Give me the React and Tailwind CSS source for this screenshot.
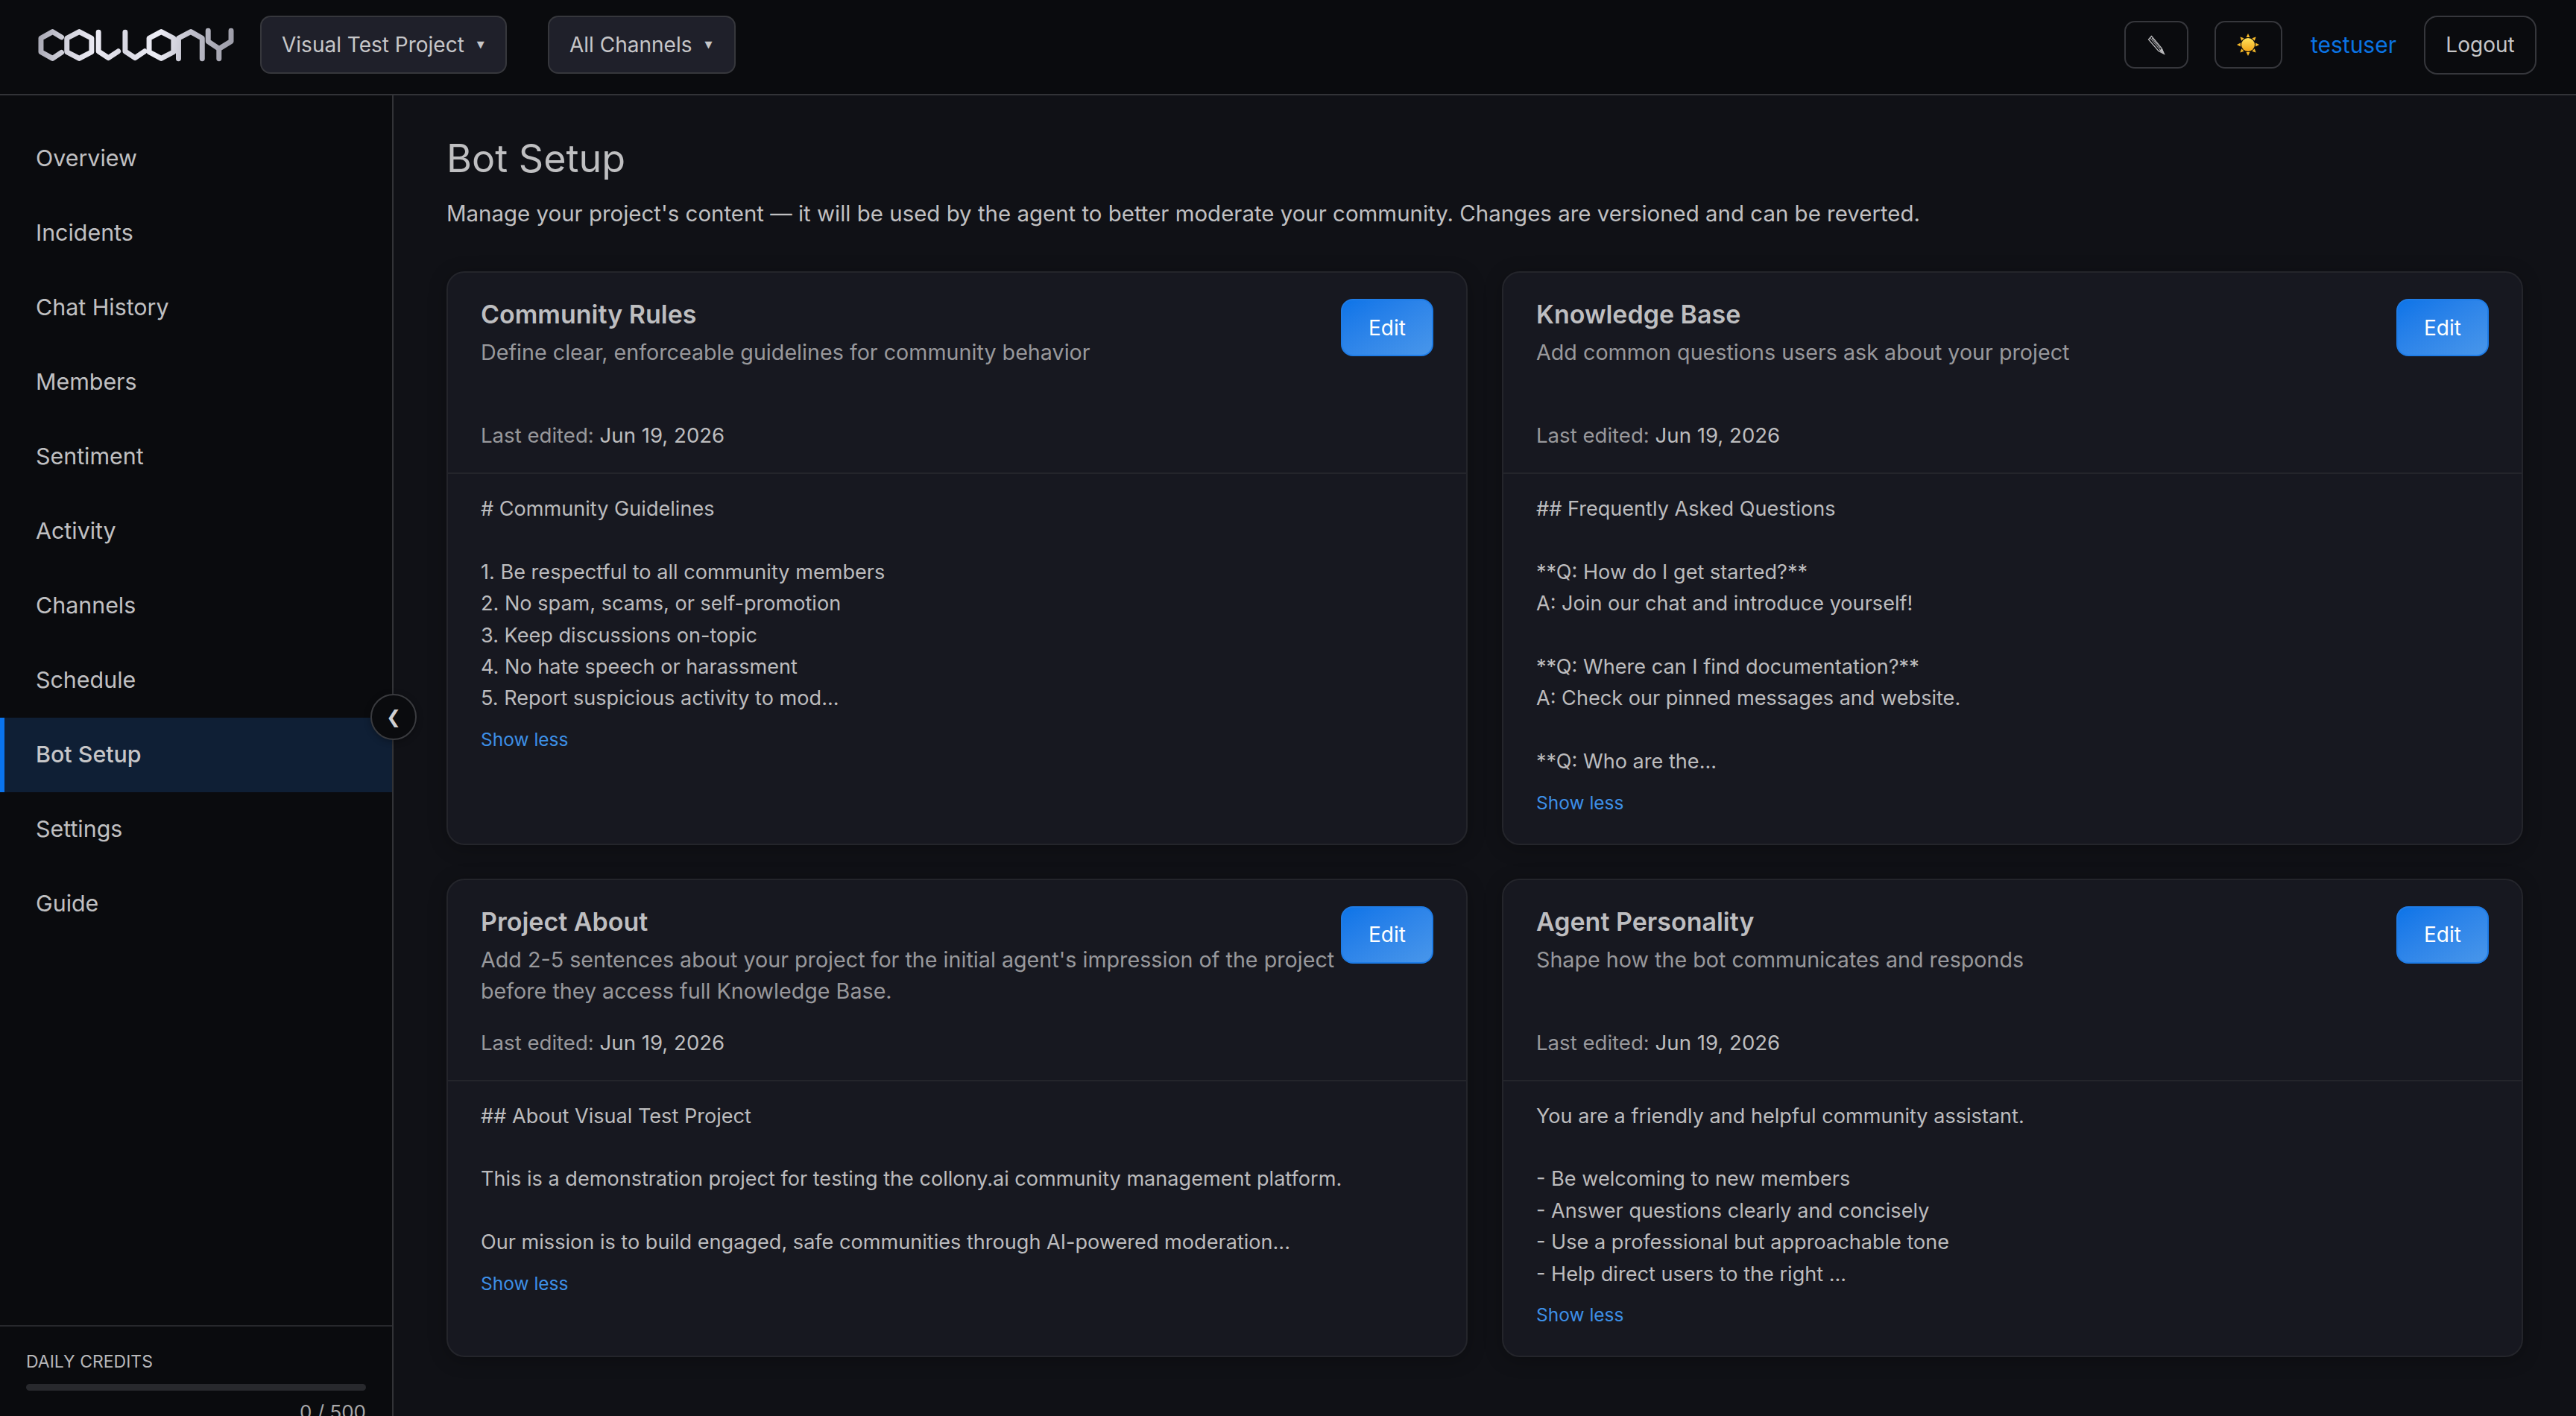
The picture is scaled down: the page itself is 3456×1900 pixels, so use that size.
import React from 'react';

const navItems = ['Overview', 'Incidents', 'Chat History', 'Members', 'Sentiment', 'Activity', 'Channels', 'Schedule', 'Bot Setup', 'Settings', 'Guide'];

const cards = [
  {
    title: 'Community Rules',
    desc: 'Define clear, enforceable guidelines for community behavior',
    body: `# Community Guidelines

1. Be respectful to all community members
2. No spam, scams, or self-promotion
3. Keep discussions on-topic
4. No hate speech or harassment
5. Report suspicious activity to mod...`,
  },
  {
    title: 'Knowledge Base',
    desc: 'Add common questions users ask about your project',
    body: `## Frequently Asked Questions

**Q: How do I get started?**
A: Join our chat and introduce yourself!

**Q: Where can I find documentation?**
A: Check our pinned messages and website.

**Q: Who are the...`,
  },
  {
    title: 'Project About',
    desc: "Add 2-5 sentences about your project for the initial agent's impression of the project before they access full Knowledge Base.",
    body: `## About Visual Test Project

This is a demonstration project for testing the collony.ai community management platform.

Our mission is to build engaged, safe communities through AI-powered moderation...`,
  },
  {
    title: 'Agent Personality',
    desc: 'Shape how the bot communicates and responds',
    body: `You are a friendly and helpful community assistant.

- Be welcoming to new members
- Answer questions clearly and concisely
- Use a professional but approachable tone
- Help direct users to the right ...`,
  },
];

function Logo() {
  const paths = [
    'M188 88 L152 66 L105 92 L105 148 L152 174 L188 150',
    'M260 66 L310 92 L310 148 L260 174 L210 148 L210 92 Z',
    'M338 68 L338 145 L378 172 L418 145',
    'M446 68 L446 145 L486 172 L525 145',
    'M592 66 L642 92 L642 148 L592 174 L543 148 L543 92 Z',
    'M662 175 L662 92 L712 66 L758 92 L758 175',
    'M782 62 L782 105 L826 135 L875 105 L875 62 M826 135 L826 175',
  ];
  return (
    <svg width="273" height="53" viewBox="80 40 820 160" fill="none" className="shrink-0">
      <defs>
        <linearGradient id="silver" gradientUnits="userSpaceOnUse" x1="90" y1="60" x2="890" y2="180">
          <stop offset="0" stopColor="#a4a4b0" />
          <stop offset="0.14" stopColor="#d0d0da" />
          <stop offset="0.3" stopColor="#ecebf4" />
          <stop offset="0.45" stopColor="#d8d8e2" />
          <stop offset="0.6" stopColor="#eeeef6" />
          <stop offset="0.78" stopColor="#bcbcc8" />
          <stop offset="1" stopColor="#9a9aa5" />
        </linearGradient>
      </defs>
      {paths.map((d) => (
        <path key={d} d={d} stroke="url(#silver)" strokeWidth="21" strokeLinejoin="round" strokeLinecap="round" />
      ))}
    </svg>
  );
}

function Pencil() {
  return (
    <svg width="24" height="27" viewBox="0 0 24 27" fill="none" stroke="#bdbdbf" strokeWidth="1.2">
      <path d="M1.5 6 L5.5 1.5 L19 17.5 L22.5 25.5 L15 21.5 Z" />
      <path d="M3.5 3.8 L17 20 M6 4 L17.5 18" strokeWidth="1" />
      <path d="M16 21 L19.5 17.5 L22.5 25.5 Z" fill="#bdbdbf" stroke="none" />
    </svg>
  );
}

function Sun() {
  const rays = [0, 45, 90, 135, 180, 225, 270, 315];
  return (
    <svg width="32" height="32" viewBox="0 0 32 32">
      <defs>
        <linearGradient id="sunFill" x1="0" y1="0" x2="0" y2="1">
          <stop offset="0" stopColor="#ffe25c" />
          <stop offset="1" stopColor="#f2a516" />
        </linearGradient>
      </defs>
      {rays.map((r) => (
        <path key={r} d="M16 1 L18.4 6 L13.6 6 Z" fill="#f7b928" transform={`rotate(${r} 16 16)`} />
      ))}
      <circle cx="16" cy="16" r="9" fill="url(#sunFill)" />
    </svg>
  );
}

function Select({ label, width }) {
  return (
    <button className={`flex items-center h-[78px] pl-[27px] rounded-[14px] border-2 border-[#36373c] bg-[#1f202a] text-[#c6c6c8] text-[28px] ${width}`}>
      {label}
      <span className="ml-[17px] text-[13px] text-[#c6c6c8]" style={{ fontFamily: '"DejaVu Sans"' }}>▼</span>
    </button>
  );
}

function Card({ title, desc, body }) {
  return (
    <section className="rounded-[24px] border-2 border-[#24252b] bg-[#171820] shadow-[0_4px_24px_rgba(0,0,0,0.25)]">
      <div className="flex items-start justify-between pl-[44px] pr-[44px] pt-[34px] pb-[30px] border-b-2 border-[#24252b] h-[270px]">
        <div className="flex-1">
          <h3 className="text-[34px] leading-[44px] font-semibold text-[#bebec0]">{title}</h3>
          <p className="mt-[8px] min-h-[84px] text-[28.7px] leading-[42px] text-[#98989c]">{desc}</p>
          <p className="mt-[27px] text-[27.6px] leading-[42px] text-[#98989c]">
            Last edited: <span className="text-[#bdbdbf]">Jun 19, 2026</span>
          </p>
        </div>
        <button className="shrink-0 mt-px w-[124px] h-[77px] rounded-[16px] border-2 border-[#1f7ce6] bg-gradient-to-br from-[#0b74e8] to-[#4896ea] text-white text-[28px]">
          Edit
        </button>
      </div>
      <div className="pl-[44px] pr-[44px] pt-[26px] pb-[37px]">
        <div className="whitespace-pre-wrap text-[27.1px] leading-[42.4px] text-[#bcbcbe]">{body}</div>
        <button className="block mt-[15px] text-[24.5px] leading-[36px] text-[#3d8fe6]">Show less</button>
      </div>
    </section>
  );
}

export default function App() {
  return (
    <div className="h-[1900px] overflow-hidden bg-[#101116] text-[#c6c6c8]" style={{ fontFamily: 'Inter, "Liberation Sans", sans-serif' }}>
      <header className="flex items-center justify-between h-[128px] pl-[46px] pr-[53px] pb-[6px] bg-[#0a0b0e] border-b-2 border-[#323337]">
        <div className="flex items-center">
          <Logo />
          <div className="ml-[30px] flex gap-[55px]">
            <Select label="Visual Test Project" width="w-[331px]" />
            <Select label="All Channels" width="w-[252px]" />
          </div>
        </div>
        <div className="flex items-center">
          <button className="flex items-center justify-center w-[86px] h-[64px] rounded-[14px] border-2 border-[#36373c]">
            <Pencil />
          </button>
          <button className="flex items-center justify-center ml-[35px] w-[91px] h-[64px] rounded-[14px] border-2 border-[#36373c]">
            <Sun />
          </button>
          <span className="ml-[38px] text-[#0a74e4] text-[30px]">testuser</span>
          <button className="ml-[37px] w-[151px] h-[79px] rounded-[18px] border-2 border-[#36373c] text-[#c6c6c8] text-[28px]">Logout</button>
        </div>
      </header>

      <div className="flex h-[1799px]">
        <aside className="relative flex flex-col w-[528px] shrink-0 bg-[#0a0b0e] border-r-2 border-[#323337]">
          <nav className="flex-1 pt-[35px]">
            {navItems.map((item) => (
              <a
                key={item}
                className={
                  item === 'Bot Setup'
                    ? 'flex items-center h-[100px] pl-[42px] border-l-[6px] border-[#0a74ee] bg-[#0f1f35] text-[30.4px] font-medium text-[#c6c6c8]'
                    : 'flex items-center h-[100px] pl-[48px] text-[30.4px] text-[#c0c0c2]'
                }
              >
                {item}
              </a>
            ))}
          </nav>
          <button
            className="absolute top-[803px] right-[-33px] z-10 flex items-center justify-center w-[62px] h-[62px] rounded-full bg-[#0a0b0e] border-2 border-[#3a3b3f] text-[#d0d0d2] text-[24px] shadow-[0_2px_10px_rgba(0,0,0,0.3)]"
            style={{ fontFamily: '"DejaVu Sans"' }}
          >
            ❮
          </button>
          <div className="h-[149px] px-[35px] pt-[31px] border-t-2 border-[#27282c]">
            <div className="text-[23px] leading-[32px] text-[#b8b8ba]">DAILY CREDITS</div>
            <div className="mt-[14px] h-[9px] rounded-full bg-[#28292d]" />
            <div className="mt-[9px] text-right text-[26px] text-[#a8a8aa]">0 / 500</div>
          </div>
        </aside>

        <main className="flex-1 px-[71px] pt-[53px]">
          <h1 className="text-[52px] leading-[64px] font-normal text-[#bfbfc1]">Bot Setup</h1>
          <p className="mt-[19px] text-[29.44px] leading-[44px] text-[#c0c0c2]">
            Manage your project's content — it will be used by the agent to better moderate your community. Changes are versioned and can be reverted.
          </p>
          <div className="mt-[56px] grid grid-cols-2 gap-x-[46px] gap-y-[45px]">
            {cards.map((card) => (
              <Card key={card.title} {...card} />
            ))}
          </div>
        </main>
      </div>
    </div>
  );
}
